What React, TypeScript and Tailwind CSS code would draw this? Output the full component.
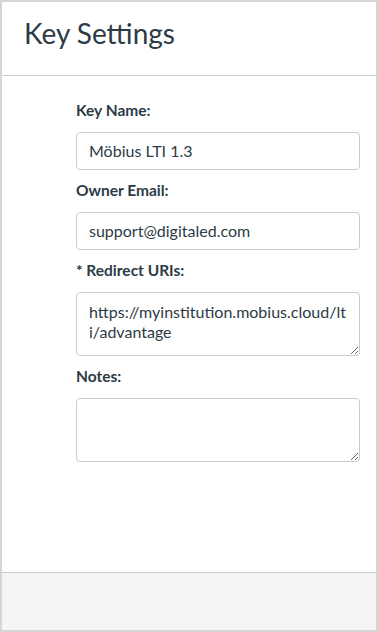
import React from "react";

export default function App() {
  const font = { fontFamily: "Lato, 'Noto Sans', sans-serif" };
  return (
    <div
      className="w-[378px] h-[632px] border-2 border-[#d6d6d6] bg-white flex flex-col text-[#2d3b45]"
      style={font}
    >
      <div className="h-[74px] border-b border-[#c7cdd1] pt-[17px] pl-[22px]">
        <h1 className="text-[28px] font-normal leading-[28px]">Key Settings</h1>
      </div>
      <div className="flex-1 pt-[24px] pl-[74px] pr-[16px] flex flex-col">
        <label className="block h-[21px] leading-[21px] text-[15.5px] font-bold mb-[11px]">Key Name:</label>
        <input
          className="h-[38px] w-full border border-[#c7cdd1] rounded-[4px] px-[12px] pb-[2px] text-[16px] text-[#2d3b45] outline-none"
          style={font}
          defaultValue="Möbius LTI 1.3"
        />
        <label className="block h-[21px] leading-[21px] text-[15.5px] font-bold mt-[10px] mb-[11px]">Owner Email:</label>
        <input
          className="h-[38px] w-full border border-[#c7cdd1] rounded-[4px] px-[12px] pb-[2px] text-[16px] text-[#2d3b45] outline-none"
          style={font}
          defaultValue="support@digitaled.com"
        />
        <label className="block h-[21px] leading-[21px] text-[15.5px] font-bold mt-[10px] mb-[11px]">* Redirect URIs:</label>
        <textarea
          className="h-[64px] w-full border border-[#c7cdd1] rounded-[4px] px-[12px] py-[9px] text-[16px] leading-[20px] text-[#2d3b45] outline-none block"
          style={font}
          defaultValue="https://myinstitution.mobius.cloud/lti/advantage"
        />
        <label className="block h-[21px] leading-[21px] text-[15.5px] font-bold mt-[10px] mb-[11px]">Notes:</label>
        <textarea
          className="h-[64px] w-full border border-[#c7cdd1] rounded-[4px] px-[12px] py-[9px] text-[16px] leading-[20px] text-[#2d3b45] outline-none block"
          style={font}
          defaultValue=""
        />
      </div>
      <div className="h-[58px] border-t border-[#c7cdd1] bg-[#f5f5f5]" />
    </div>
  );
}
